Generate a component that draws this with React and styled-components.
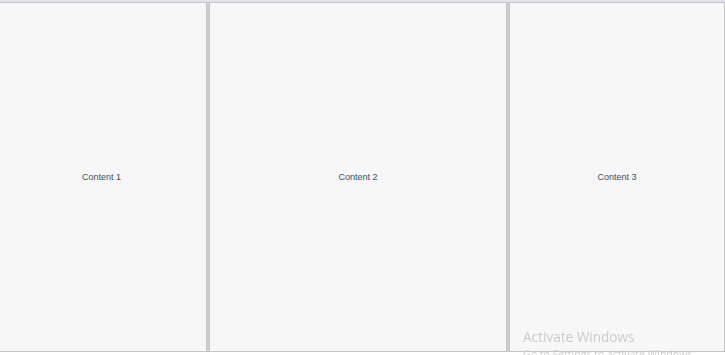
import React from 'react'
import styled, { createGlobalStyle } from 'styled-components'

const Global = createGlobalStyle`
  html, body {
    margin: 0;
    padding: 0;
    background: #ffffff;
    overflow: hidden;
  }
  body {
    font-family: "Liberation Sans", Arial, sans-serif;
  }
`

const Frame = styled.div`
  width: 725px;
  height: 355px;
  overflow: hidden;
  border-top: 2px solid #dfe3ea;
  box-sizing: border-box;
`

const Split = styled.div`
  display: flex;
  height: 350px;
  margin-left: -4px;
  width: 729px;
`

const Pane = styled.div`
  flex: 0 0 ${p => p.$w}px;
  box-sizing: border-box;
  background: #f7f7f7;
  border: 1px solid #c4c4c4;
  display: flex;
  align-items: center;
  justify-content: center;
  font-size: 9px;
  color: #3b4d63;
`

const Gutter = styled.div`
  flex: 0 0 2px;
  background: #cfcfcf;
`

const Watermark = styled.div`
  position: fixed;
  left: 523px;
  top: 330px;
  font-family: "Open Sans", "Noto Sans", sans-serif;
  color: #cbcbcb;
  pointer-events: none;
  line-height: 1;
`

const WmTitle = styled.div`
  font-size: 13.6px;
`

const WmSub = styled.div`
  font-size: 10.5px;
  margin-top: 5px;
`

export default function App() {
  return (
    <>
      <Global />
      <Frame>
        <Split>
          <Pane $w={211}>Content 1</Pane>
          <Gutter />
          <Pane $w={298}>Content 2</Pane>
          <Gutter />
          <Pane $w={216}>Content 3</Pane>
        </Split>
      </Frame>
      <Watermark>
        <WmTitle>Activate Windows</WmTitle>
        <WmSub>Go to Settings to activate Windows.</WmSub>
      </Watermark>
    </>
  )
}
